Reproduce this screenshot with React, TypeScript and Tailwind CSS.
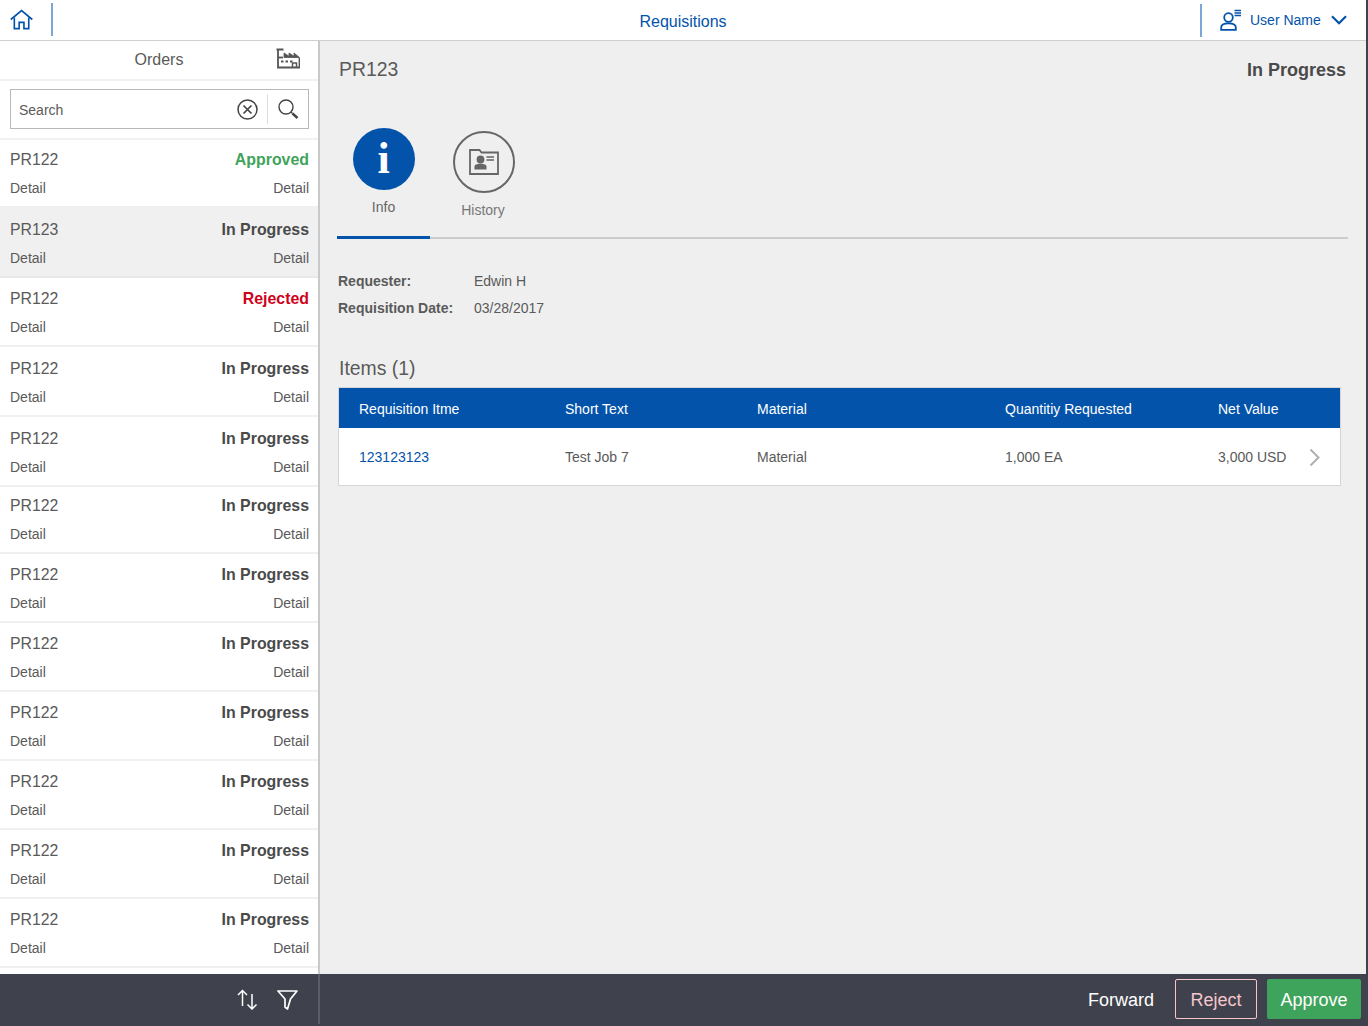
const progress = "text-[#4a4a4a]"

const rows = [
  { id: "PR122", status: "Approved", color: "text-[#3fa45b]", h: "h-[68px] pt-[10px]" },
  { id: "PR123", status: "In Progress", color: progress, h: "h-[70px] pt-[12px]", active: true },
  { id: "PR122", status: "Rejected", color: "text-[#d0021b]", h: "h-[69px] pt-[11px]" },
  { id: "PR122", status: "In Progress", color: progress, h: "h-[70px] pt-[12px]" },
  { id: "PR122", status: "In Progress", color: progress, h: "h-[70px] pt-[12px]" },
  { id: "PR122", status: "In Progress", color: progress, h: "h-[67px] pt-[9px]" },
  { id: "PR122", status: "In Progress", color: progress, h: "h-[69px] pt-[11px]" },
  { id: "PR122", status: "In Progress", color: progress, h: "h-[69px] pt-[11px]" },
  { id: "PR122", status: "In Progress", color: progress, h: "h-[69px] pt-[11px]" },
  { id: "PR122", status: "In Progress", color: progress, h: "h-[69px] pt-[11px]" },
  { id: "PR122", status: "In Progress", color: progress, h: "h-[69px] pt-[11px]" },
  { id: "PR122", status: "In Progress", color: progress, h: "h-[69px] pt-[11px]" },
]

const columns = [
  { label: "Requisition Itme", value: "123123123", w: "w-[206px]" },
  { label: "Short Text", value: "Test Job 7", w: "w-[192px]" },
  { label: "Material", value: "Material", w: "w-[248px]" },
  { label: "Quantitiy Requested", value: "1,000 EA", w: "w-[213px]" },
  { label: "Net Value", value: "3,000 USD", w: "w-[91px]" },
]

function HomeIcon() {
  return (
    <svg width="24" height="21" viewBox="0 0 24 21" fill="none" stroke="#0353ab" strokeWidth="1.7">
      <path d="M.8 10.5 12 1.2l11.2 9.3" />
      <path d="M4.5 8.5V20h5v-6.5h5V20h5V8.5" />
    </svg>
  )
}

function UserIcon() {
  return (
    <svg width="22" height="22" viewBox="0 0 22 22" fill="none" stroke="#0353ab" strokeWidth="1.8">
      <circle cx="8.5" cy="8.5" r="4.3" />
      <path d="M1.2 20.8v-2.6c0-2.4 3.2-3.8 7.3-3.8s7.3 1.4 7.3 3.8v2.6z" />
      <path d="M14.5 1.5h6.5M14.5 4h6.5M14.5 6.5h6.5" strokeWidth="1.3" />
    </svg>
  )
}

function FactoryIcon() {
  return (
    <svg width="24" height="21" viewBox="0 0 24 21" fill="none" stroke="#555" strokeWidth="1.8">
      <path d="M.5 1.5h7M2 1.5v18h21.5V10" />
      <path d="M2 9.5h5" />
      <path d="M8 5l5 3.2V5l5 3.2V5l5.5 4.5H8z" fill="#555" strokeWidth="0.8" />
      <path d="M5 13.5h2.5M9.5 13.5h2.5M14 13.5h2.5" />
      <path d="M16.5 19.5v-4.5h4v4.5" strokeWidth="1.5" />
    </svg>
  )
}

function FolderIcon() {
  return (
    <svg width="30" height="28" viewBox="0 0 30 28" fill="none">
      <path d="M1 26V2h9.5l2 2.5H29V26z" stroke="#666" strokeWidth="1.8" fill="none" />
      <circle cx="11.5" cy="11.5" r="3.9" fill="#666" />
      <path d="M5.5 21.5v-3c0-1.8 2.6-2.8 6-2.8s6 1 6 2.8v3z" fill="#666" />
      <path d="M17.5 9h7.5M17.5 12h7.5" stroke="#666" strokeWidth="1.4" />
    </svg>
  )
}

function ClearIcon() {
  return (
    <svg width="21" height="21" viewBox="0 0 21 21" fill="none" stroke="#444" strokeWidth="1.5">
      <circle cx="10.5" cy="10.5" r="9.5" />
      <path d="M6.5 6.5l8 8M14.5 6.5l-8 8" strokeWidth="1.7" />
    </svg>
  )
}

function SearchIcon() {
  return (
    <svg width="21" height="20" viewBox="0 0 21 20" fill="none" stroke="#444">
      <circle cx="8" cy="8" r="7" strokeWidth="1.4" />
      <path d="M13 13l1.5 1.5" strokeWidth="1.2" />
      <path d="M14.5 14.5l5 4.5" strokeWidth="2.4" />
    </svg>
  )
}

function SortIcon() {
  return (
    <svg width="21" height="21" viewBox="0 0 21 21" fill="none" stroke="#fff" strokeWidth="1.5">
      <path d="M5.5 17V1.5M1 6l4.5-4.5L10 6" />
      <path d="M15 5v15M10.5 15.5 15 20l4.5-4.5" />
    </svg>
  )
}

function FunnelIcon() {
  return (
    <svg width="21" height="20" viewBox="0 0 21 20" fill="none" stroke="#fff" strokeWidth="1.7">
      <path d="M1 1h19l-6.5 8-3 10-2.5-2V9z" strokeLinejoin="round" />
    </svg>
  )
}

export default function App() {
  return (
    <div className="h-[1026px] w-[1368px] overflow-hidden flex flex-col bg-[#3f424d] font-['Liberation_Sans',Arial,sans-serif] text-[#5a5a5a]">
      <header className="h-[41px] shrink-0 mr-[2px] flex items-center bg-white border-b border-[#cfcfcf]">
        <div className="w-[53px] h-full flex items-center pl-[10px] pb-[1px]">
          <HomeIcon />
          <span className="ml-[18px] w-[2px] h-[33px] bg-[#7ba7d6]" />
        </div>
        <div className="flex-1 pl-[113px] pt-[4px] text-center text-[16px] text-[#0353ab]">Requisitions</div>
        <div className="w-[166px] h-full flex items-center">
          <span className="w-[2px] h-[33px] bg-[#7ba7d6]" />
          <span className="ml-[18px]"><UserIcon /></span>
          <span className="ml-[8px] text-[14px] text-[#0353ab]">User Name</span>
          <svg width="16" height="10" viewBox="0 0 16 10" fill="none" stroke="#0353ab" strokeWidth="2.2" className="ml-[10px]">
            <path d="M1 1.2l7 7 7-7" />
          </svg>
        </div>
      </header>

      <div className="flex-1 min-h-0 mr-[2px] flex bg-[#efefef]">
        <aside className="w-[318px] shrink-0 bg-white flex flex-col">
          <div className="h-[38px] shrink-0 flex items-center relative">
            <span className="w-full text-center text-[16px]">Orders</span>
            <span className="absolute right-[18px] top-[7px]"><FactoryIcon /></span>
          </div>
          <div className="h-[61px] shrink-0 border-y-2 border-[#f2f2f2] pl-[10px] pr-[9px] pb-[1px] flex items-center">
            <div className="w-full h-[40px] border border-[#b8b8b8] flex items-center pl-[8px]">
              <span className="flex-1 pt-[2px] text-[14px]">Search</span>
              <ClearIcon />
              <span className="ml-[9px] w-[1px] h-[30px] bg-[#dddddd]" />
              <span className="ml-[10px] mr-[9px]"><SearchIcon /></span>
            </div>
          </div>
          <div className="flex-1 min-h-0">
            {rows.map((r, i) => (
              <div key={i} className={`${r.h} pl-[10px] pr-[9px] border-b-2 ${r.active ? "bg-[#f0f0f0] border-[#e8e8e8]" : "bg-white border-[#f0f0f0]"}`}>
                <div className="flex justify-between items-center h-[20px]">
                  <span className="text-[15.8px]">{r.id}</span>
                  <span className={`text-[15.9px] font-bold ${r.color}`}>{r.status}</span>
                </div>
                <div className="mt-[8px] flex justify-between items-center h-[20px] text-[14px]">
                  <span>Detail</span>
                  <span>Detail</span>
                </div>
              </div>
            ))}
          </div>
        </aside>
        <div className="w-[2px] shrink-0 bg-[#c9c9c9]" />

        <main className="flex-1 min-w-0 pl-[18px]">
          <div className="h-[58px] pr-[20px] pt-[15px] flex justify-between items-start">
            <h1 className="text-[19.4px] ml-[1px] leading-[26px]">PR123</h1>
            <span className="text-[18px] font-bold text-[#4a4a4a] leading-[28px]">In Progress</span>
          </div>
          <div className="-ml-[1px] mr-[18px] h-[140px] pt-[29px] border-b-2 border-[#cccccc] relative flex">
            <div className="w-[93px] flex flex-col items-center">
              <div className="w-[62px] h-[62px] rounded-full bg-[#0353ab] flex items-center justify-center">
                <span className="text-white text-[44px] font-bold font-['Liberation_Serif',serif] leading-none">i</span>
              </div>
              <span className="mt-[7px] text-[14px] text-[#666]">Info</span>
            </div>
            <div className="w-[108px] pt-[3px] flex flex-col items-center">
              <div className="w-[62px] h-[62px] rounded-full border-2 border-[#666] flex items-center justify-center">
                <FolderIcon />
              </div>
              <span className="mt-[7px] pr-[2px] text-[14px] text-[#777]">History</span>
            </div>
            <span className="absolute left-0 bottom-[-2px] w-[93px] h-[3px] bg-[#0353ab]" />
          </div>

          <div className="mt-[32px] text-[14px] flex flex-col gap-[7px]">
            <div className="flex h-[20px] items-center"><span className="w-[136px] font-bold">Requester:</span><span>Edwin H</span></div>
            <div className="flex h-[20px] items-center"><span className="w-[136px] font-bold">Requisition Date:</span><span>03/28/2017</span></div>
          </div>

          <h2 className="mt-[37px] ml-[1px] text-[19.4px] leading-[26px]">Items (1)</h2>
          <div className="mt-[6px] w-[1003px] border border-[#d5d5d5] bg-white">
            <div className="h-[40px] pt-[3px] bg-[#0353ab] text-white text-[14px] flex items-center pl-[20px]">
              {columns.map((c) => <span key={c.label} className={c.w}>{c.label}</span>)}
            </div>
            <div className="h-[57px] pt-[1px] text-[14px] flex items-center pl-[20px] relative">
              {columns.map((c, i) => <span key={c.label} className={`${c.w} ${i === 0 ? "text-[#0353ab]" : ""}`}>{c.value}</span>)}
              <svg width="12" height="19" viewBox="0 0 12 19" fill="none" stroke="#b0b0b0" strokeWidth="2" className="absolute right-[19px]">
                <path d="M1.5 1.5l8 8-8 8" />
              </svg>
            </div>
          </div>
        </main>
      </div>

      <footer className="h-[50px] shrink-0 mb-[2px] flex items-center bg-[#3f424d]">
        <div className="w-[318px] h-full flex items-center justify-end pr-[20px] gap-[19px] pt-[1px]">
          <SortIcon />
          <FunnelIcon />
        </div>
        <span className="w-[2px] h-full bg-[#5a5d6b]" />
        <div className="flex-1 h-full flex items-center justify-end pr-[7px] text-[18px]">
          <span className="text-white pt-[2px]">Forward</span>
          <span className="ml-[21px] w-[82px] h-[40px] pt-[2px] rounded-[2px] border border-[#f6c6cc] text-[#f6c6cc] flex items-center justify-center">Reject</span>
          <span className="ml-[10px] w-[94px] h-[40px] pt-[2px] rounded-[2px] bg-[#3fa45b] text-white flex items-center justify-center">Approve</span>
        </div>
      </footer>
    </div>
  )
}
